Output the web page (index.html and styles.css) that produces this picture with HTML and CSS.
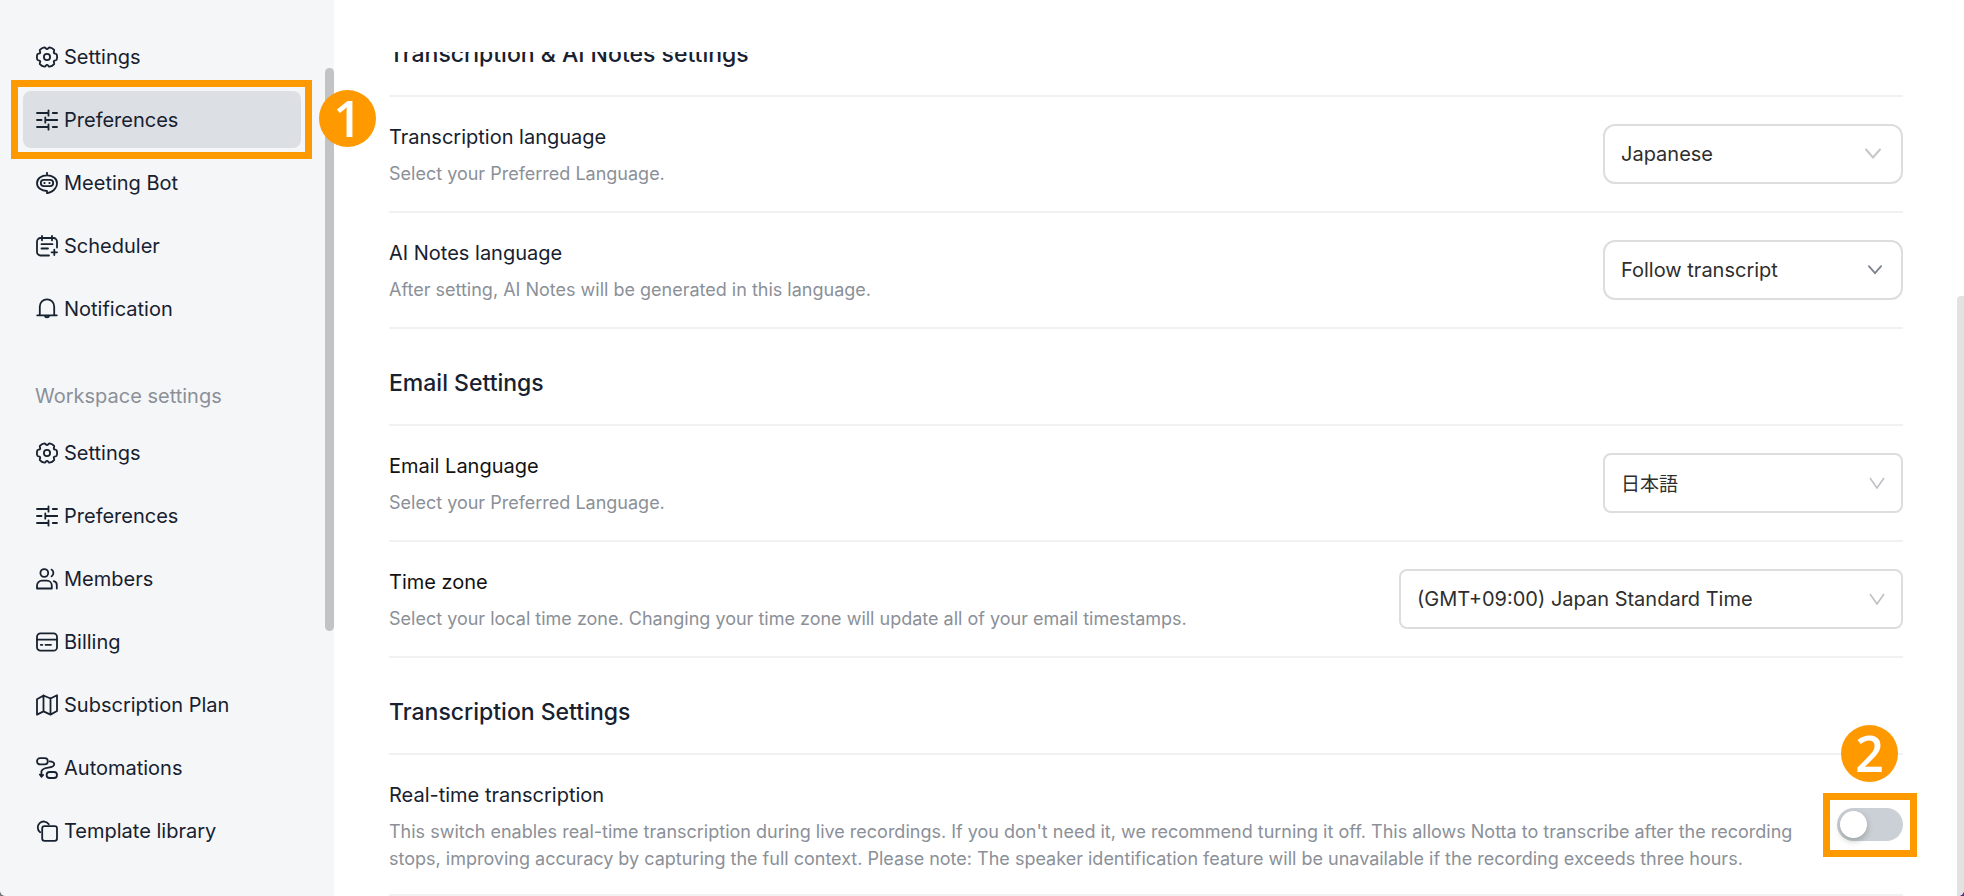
FILE: index.html
```html
<!DOCTYPE html>
<html lang="en">
<head>
<meta charset="utf-8">
<title>Preferences</title>
<link rel="stylesheet" href="styles.css">
</head>
<body>
<svg class="sprite" aria-hidden="true">
  <symbol id="i-gear" viewBox="0 0 22 22">
    <g transform="translate(11 11)">
      <path d="M9.700-2.600Q10.500 0 9.700 2.600C9.200 3.600 7.400 3 6.900 4C6.300 5 7.700 6.300 7.100 7.100Q5.300 9.300 2.600 9.700C1.500 9.700 1.200 7.900 0 7.900S-1.500 9.700 -2.600 9.700Q-5.300 9.300 -7.100 7.100C-7.700 6.300 -6.300 5 -6.900 4C-7.400 3 -9.200 3.600 -9.700 2.600Q-10.500 0 -9.700-2.600C-9.200-3.600 -7.400-3 -6.900-4C-6.300-5 -7.700-6.300 -7.100-7.100Q-5.300-9.300 -2.600-9.700C-1.500-9.700 -1.200-7.900 0-7.900S1.500-9.700 2.600-9.700Q5.300-9.300 7.100-7.100C7.700-6.300 6.300-5 6.900-4C7.400-3 9.200-3.600 9.700-2.600Z"/>
      <circle r="3.100"/>
    </g>
  </symbol>
  <symbol id="i-sliders" viewBox="0 0 22 22">
    <path d="M1 4h11.500M12.500 1.300v5.400M16.800 4H21M1 11h4.500M9.300 8.300v5.400M9.300 11H21.500M1 18h11.500M12.500 15.300v5.400M16.800 18H21"/>
  </symbol>
  <symbol id="i-bot" viewBox="0 0 22 22">
    <path d="M11 .8V3.300M11 19v2.200c3.500-.6 7-2.800 8.400-5.200M11 19C5.500 19 1 15.800 1 11.200S5.500 3.400 11 3.400s10 3.200 10 7.800c0 1.800-.6 3.500-1.600 4.800"/>
    <rect x="4.800" y="7.800" width="12.400" height="6.400" rx="3.200"/>
    <path d="M8.300 11h.4M13.300 11h.4"/>
  </symbol>
  <symbol id="i-calendar" viewBox="0 0 22 22">
    <path d="M13 20.500H4.500A3.500 3.500 0 0 1 1 17V6.500A3.500 3.500 0 0 1 4.500 3h13A3.500 3.500 0 0 1 21 6.500V12.500M6 .9v4.400M16 .9v4.400M5.500 9.200h11M5.500 13.500h6.500M18.300 14.600v5.400M15.600 17.300h5.400"/>
  </symbol>
  <symbol id="i-bell" viewBox="0 0 22 22">
    <path d="M1.200 17.300h19.600M3.800 17.300V8.500a7.200 7.200 0 0 1 14.400 0v8.800M8.700 17.600a2.400 2.600 0 0 0 4.600 0"/>
  </symbol>
  <symbol id="i-members" viewBox="0 0 22 22">
    <circle cx="8.300" cy="5" r="3.900"/>
    <path d="M1 20.500v-2.800a5 5 0 0 1 5-5h4.800a5 5 0 0 1 5 5v2.800ZM15.500 1.600a4 4 0 0 1 0 6.800M17.800 13.200a4 4 0 0 1 3 4v3.300"/>
  </symbol>
  <symbol id="i-card" viewBox="0 0 22 22">
    <rect x="1" y="2.300" width="20" height="17.400" rx="3.500"/>
    <path d="M1 8.700h20M4.800 13.800h1.500M9.500 13.800h5.500"/>
  </symbol>
  <symbol id="i-map" viewBox="0 0 22 22">
    <path d="M1 5.200L7.500 1.500L14.500 4.500L21 1.200V17L14.500 20.600L7.500 17.400L1 20.600ZM7.500 1.500V17.400M14.500 4.500V20.600"/>
  </symbol>
  <symbol id="i-flow" viewBox="0 0 22 22">
    <rect x="1" y="1.200" width="10.800" height="6.200" rx="3.100"/>
    <rect x="10.600" y="15" width="10.400" height="6" rx="3"/>
    <path d="M13.600 4.300c3.200 0 4.600 1.300 4.600 3.200 0 4.600-12.800 1.700-12.800 7.300v4.800M3.900 17.600l1.500 2.200 1.700-1.900"/>
  </symbol>
  <symbol id="i-template" viewBox="0 0 22 22">
    <rect x="6.200" y="6.200" width="14.800" height="14.600" rx="2.300"/>
    <path d="M4.200 12.300A6 6 0 1 1 12.800 4.200"/>
  </symbol>
  <symbol id="i-chevron" viewBox="0 0 16 12">
    <path d="M1 1.500l7 8 7-8"/>
  </symbol>
  <symbol id="i-chevron-deep" viewBox="0 0 16 12">
    <path d="M1 1l7 10 7-10"/>
  </symbol>
</svg>

<div class="app">
  <aside class="sidebar">
    <nav class="nav" aria-label="Settings">
      <a class="nav-item" href="#"><svg class="icon"><use href="#i-gear"/></svg>Settings</a>
      <a class="nav-item nav-item--active" href="#" aria-current="page"><svg class="icon"><use href="#i-sliders"/></svg>Preferences
        <span class="frame frame--nav"></span><span class="step step--nav">1</span></a>
      <a class="nav-item" href="#"><svg class="icon"><use href="#i-bot"/></svg>Meeting Bot</a>
      <a class="nav-item" href="#"><svg class="icon"><use href="#i-calendar"/></svg>Scheduler</a>
      <a class="nav-item" href="#"><svg class="icon"><use href="#i-bell"/></svg>Notification</a>
      <h2 class="nav-title">Workspace settings</h2>
      <a class="nav-item" href="#"><svg class="icon"><use href="#i-gear"/></svg>Settings</a>
      <a class="nav-item" href="#"><svg class="icon"><use href="#i-sliders"/></svg>Preferences</a>
      <a class="nav-item" href="#"><svg class="icon"><use href="#i-members"/></svg>Members</a>
      <a class="nav-item" href="#"><svg class="icon"><use href="#i-card"/></svg>Billing</a>
      <a class="nav-item" href="#"><svg class="icon"><use href="#i-map"/></svg>Subscription Plan</a>
      <a class="nav-item" href="#"><svg class="icon"><use href="#i-flow"/></svg>Automations</a>
      <a class="nav-item" href="#"><svg class="icon"><use href="#i-template"/></svg>Template library</a>
    </nav>
    <span class="scrollbar scrollbar--nav"></span>
  </aside>

  <main class="main">
    <div class="content">
      <h2 class="section-title section-title--scrolled">Transcription &amp; AI Notes settings</h2>
      <div class="row">
        <div class="info">
          <label class="label" for="transcription-language">Transcription language</label>
          <p class="hint">Select your Preferred Language.</p>
        </div>
        <div class="picker">
          <select class="select select--round" id="transcription-language"><option>Japanese</option></select>
          <svg class="arrow arrow--inset"><use href="#i-chevron"/></svg>
        </div>
      </div>
      <div class="row">
        <div class="info">
          <label class="label" for="notes-language">AI Notes language</label>
          <p class="hint">After setting, AI Notes will be generated in this language.</p>
        </div>
        <div class="picker">
          <select class="select select--round" id="notes-language"><option>Follow transcript</option></select>
          <svg class="arrow arrow--small"><use href="#i-chevron"/></svg>
        </div>
      </div>

      <h2 class="section-title">Email Settings</h2>
      <div class="row">
        <div class="info">
          <label class="label label--black" for="email-language">Email Language</label>
          <p class="hint">Select your Preferred Language.</p>
        </div>
        <div class="picker">
          <select class="select select--ja" id="email-language"><option lang="ja">日本語</option></select>
          <svg class="arrow"><use href="#i-chevron-deep"/></svg>
        </div>
      </div>
      <div class="row">
        <div class="info">
          <label class="label label--black" for="time-zone">Time zone</label>
          <p class="hint">Select your local time zone. Changing your time zone will update all of your email timestamps.</p>
        </div>
        <div class="picker picker--wide">
          <select class="select" id="time-zone"><option>(GMT+09:00) Japan Standard Time</option></select>
          <svg class="arrow"><use href="#i-chevron-deep"/></svg>
        </div>
      </div>

      <h2 class="section-title">Transcription Settings</h2>
      <div class="row row--switch">
        <div class="info">
          <label class="label" for="real-time">Real-time transcription</label>
          <p class="hint">This switch enables real-time transcription during live recordings. If you don't need it, we recommend turning it off. This allows Notta to transcribe after the recording stops, improving accuracy by capturing the full context. Please note: The speaker identification feature will be unavailable if the recording exceeds three hours.</p>
        </div>
        <div class="toggle">
          <input class="switch" type="checkbox" role="switch" id="real-time">
          <span class="frame frame--switch"></span><span class="step step--switch">2</span>
        </div>
      </div>
    </div>
    <span class="scrollbar scrollbar--main"></span>
  </main>
</div>
</body>
</html>
```

FILE: styles.css
```css
* {
  box-sizing: border-box;
}

body {
  margin: 0;
  background: linear-gradient(90deg, #77797d, #5b2d84);
  color: #17212f;
  font-family: Inter, "Noto Sans CJK JP", sans-serif;
  font-size: 20px;
  line-height: 30px;
}

h2,
p {
  margin: 0;
}

.sprite {
  position: absolute;
  width: 0;
  height: 0;
}

.app {
  display: flex;
  height: 100vh;
  overflow: hidden;
  border-radius: 0 0 6px 6px;
  background: #fff;
}

/* Sidebar */

.sidebar {
  position: relative;
  z-index: 1;
  flex: 0 0 334px;
  background: #f5f6f8;
}

.nav {
  display: flex;
  flex-direction: column;
  gap: 6px;
  padding: 28px 33px 0 23px;
}

.nav-item {
  position: relative;
  display: flex;
  align-items: center;
  gap: 6px;
  height: 57px;
  padding-left: 13px;
  border-radius: 8px;
  color: inherit;
  text-decoration: none;
}

.nav-item--active {
  z-index: 1;
  background: #dcdfe4;
}

.nav-title {
  padding: 38px 0 7px 12px;
  color: #8b9098;
  font-size: 20px;
  font-weight: 400;
}

.icon {
  width: 22px;
  height: 22px;
  fill: none;
  stroke: currentColor;
  stroke-width: 1.8;
  stroke-linecap: round;
  stroke-linejoin: round;
}

.scrollbar {
  position: absolute;
  right: 0;
}

.scrollbar--nav {
  top: 68px;
  width: 9px;
  height: 563px;
  border-radius: 5px;
  background: #c2c3c5;
}

.scrollbar--main {
  top: 296px;
  bottom: 0;
  width: 7px;
  border-radius: 4px 0 0 0;
  background: #e2e2e2;
}

/* Main */

.main {
  position: relative;
  flex: 1;
  min-width: 0;
  padding-top: 52px;
}

.content {
  height: 100%;
  padding: 0 61px 0 55px;
  overflow: hidden;
}

.section-title {
  padding: 39px 0 26px;
  border-bottom: 2px solid #f0f1f2;
  font-size: 23px;
  font-weight: 500;
}

.section-title--scrolled {
  margin-top: -52px;
}

.row {
  display: flex;
  align-items: center;
  justify-content: space-between;
  gap: 44px;
  padding: 25px 0 24px;
  border-bottom: 2px solid #f0f1f2;
}

.row--switch {
  padding-bottom: 22px;
}

.info {
  display: flex;
  flex-direction: column;
  align-items: flex-start;
  gap: 8px;
}

.label--black {
  color: #121212;
}

.hint {
  color: #8b9098;
  font-size: 18px;
  line-height: 27px;
}

.picker {
  position: relative;
  flex: 0 0 300px;
  margin: -3px 0 -2px;
}

.picker--wide {
  flex-basis: 504px;
}

.select {
  display: block;
  width: 100%;
  height: 60px;
  padding: 0 48px 0 16px;
  appearance: none;
  border: 2px solid #dcdddf;
  border-radius: 8px;
  background: #fff;
  color: #2e2e2e;
  font: inherit;
}

.select--round {
  border-radius: 12px;
}

.select--ja {
  font-family: "Noto Sans CJK JP", sans-serif;
  font-size: 19px;
}

.arrow {
  position: absolute;
  top: 24px;
  right: 18px;
  width: 16px;
  height: 12px;
  fill: none;
  stroke: #bfc0c3;
  stroke-width: 1.6;
  pointer-events: none;
}

.arrow--inset {
  right: 22px;
  stroke: #c4c6ca;
  stroke-width: 2;
  stroke-linecap: round;
}

.arrow--small {
  right: 21px;
  width: 14px;
  stroke: #7b828e;
  stroke-width: 2;
  stroke-linecap: round;
}

.toggle {
  position: relative;
  flex: none;
  margin-bottom: 3px;
}

.switch {
  display: flex;
  align-items: center;
  width: 66px;
  height: 33px;
  margin: 0;
  padding: 0 3px;
  appearance: none;
  border-radius: 17px;
  background: #cbcfd6;
}

.switch::before {
  content: "";
  width: 27px;
  height: 27px;
  border-radius: 50%;
  background: #fff;
  box-shadow: 0 3px 6px rgba(0, 35, 11, 0.25);
}

.switch:checked {
  justify-content: flex-end;
  background: #3370ff;
}

/* Guide markers */

.frame {
  position: absolute;
  border: 7px solid #f90;
  pointer-events: none;
}

.frame--nav {
  inset: -11px -11px -11px -12px;
}

.frame--switch {
  inset: -15px -14px -16px;
}

.step {
  position: absolute;
  display: flex;
  align-items: center;
  justify-content: center;
  width: 57px;
  height: 57px;
  border-radius: 50%;
  background: #f90;
  color: #fff;
  font-family: "Open Sans", sans-serif;
  font-size: 50px;
  font-weight: 600;
  line-height: 57px;
}

.step--nav {
  top: -1px;
  left: 296px;
}

.step--switch {
  bottom: 59px;
  left: 4px;
}
```
